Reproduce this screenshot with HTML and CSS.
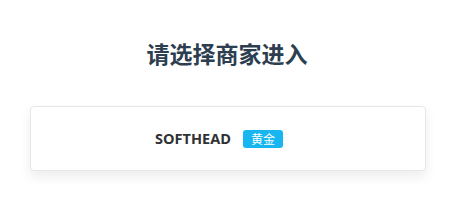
FILE: index.html
```html
<!DOCTYPE html>
<html lang="zh">
<head>
<meta charset="utf-8">
<link rel="stylesheet" href="styles.css">
</head>
<body>
<div class="page">
  <h1 class="title">请选择商家进入</h1>
  <div class="card">
    <div class="row">
      <span class="name">SOFTHEAD</span>
      <span class="badge">黄金</span>
    </div>
  </div>
</div>
</body>
</html>
```
FILE: styles.css
```css
html, body {
  margin: 0;
  padding: 0;
  background: #ffffff;
}
body {
  font-family: "Open Sans", "Noto Sans CJK SC", sans-serif;
  width: 462px;
  height: 201px;
  overflow: hidden;
}
.page {
  margin: 0 36px 0 30px;
  padding-top: 38px;
}
.title {
  margin: 0;
  text-align: center;
  font-size: 23px;
  line-height: 30px;
  font-weight: 700;
  color: #2c3e50;
  font-family: "Noto Sans CJK SC", sans-serif;
  padding-right: 2px;
}
.card {
  margin-top: 38px;
  height: 63px;
  border: 1px solid #e6e6ea;
  border-radius: 4px;
  box-shadow: 0 6px 12px rgba(0, 0, 0, 0.07);
  display: flex;
  align-items: center;
  justify-content: center;
}
.row {
  display: flex;
  align-items: center;
  gap: 12px;
  padding-right: 18px;
}
.name {
  font-size: 14.5px;
  font-weight: 700;
  color: #303133;
}
.badge {
  background: #18b6f0;
  color: #ffffff;
  font-size: 12px;
  line-height: 18px;
  padding: 0 8px;
  border-radius: 3px;
  font-family: "Noto Sans CJK SC", sans-serif;
}
```
